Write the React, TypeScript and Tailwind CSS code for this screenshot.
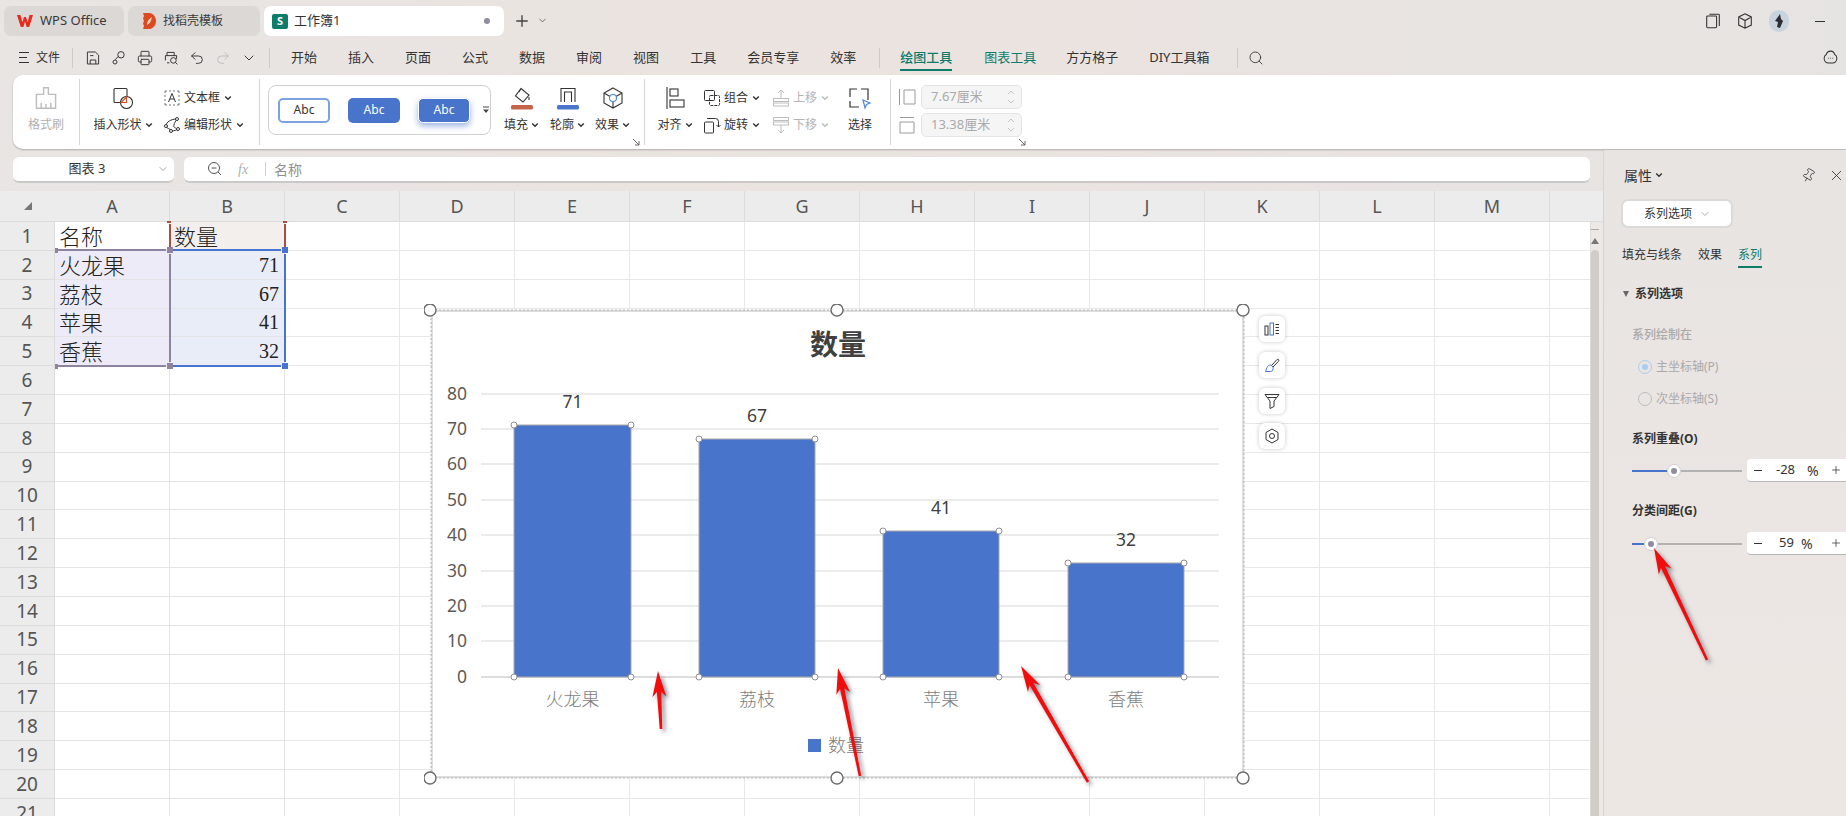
import React from 'react';
import { ChevronDown, Plus, Search, Undo2, Redo2, Pin, X, Printer } from 'lucide-react';

const ink = '#333333';

// small svg wrapper, every toolbar glyph is drawn on a 20 box
const Glyph = ({ size = 18, color = ink, children, className = '' }: { size?: number; color?: string; children: React.ReactNode; className?: string }) => (
  <svg width={size} height={size} viewBox="0 0 20 20" fill="none" stroke={color} strokeWidth="1.2" className={`shrink-0 ${className}`}>
    {children}
  </svg>
);

const Caret = ({ gray }: { gray?: boolean }) => (
  <svg width="8" height="6" viewBox="0 0 8 6" fill="none" stroke={gray ? '#bbbbbb' : '#333333'} strokeWidth="1.4" className="shrink-0 ml-[3px]">
    <path d="M1.2 1.5 4 4.3 6.8 1.5" />
  </svg>
);

const Corner = ({ className }: { className: string }) => (
  <svg width="8" height="8" viewBox="0 0 8 8" fill="none" stroke="#666666" className={`self-end shrink-0 mb-[3px] ${className}`}>
    <path d="M1 1 7 7M7 3v4H3" />
  </svg>
);

const VSep = () => <div className="w-px h-[66px] self-center bg-[#d6d6d6] shrink-0" />;

const MenuSep = ({ className }: { className: string }) => <div className={`w-px h-[20px] bg-[#cfcac7] shrink-0 ${className}`} />;

const RowA = ({ children, className = '' }: { children: React.ReactNode; className?: string }) => (
  <div className={`h-[24px] flex items-center ${className}`}>{children}</div>
);
const RowB = ({ children, className = '' }: { children: React.ReactNode; className?: string }) => (
  <div className={`mt-[4px] h-[22px] flex items-center ${className}`}>{children}</div>
);

const Tall = ({ icon, label, width, caret = true, className = '', gray }: { icon: React.ReactNode; label: string; width: string; caret?: boolean; className?: string; gray?: boolean }) => (
  <div className={`${width} ${className} pt-[11px] flex flex-col items-center shrink-0`}>
    <RowA>{icon}</RowA>
    <RowB className={gray ? 'text-[#b0b0b0]' : ''}>
      <span className="whitespace-nowrap">{label}</span>
      {caret && <Caret />}
    </RowB>
  </div>
);

const SmallItem = ({ icon, label, gray }: { icon: React.ReactNode; label: string; gray?: boolean }) => (
  <>
    {icon}
    <span className={`ml-[3px] whitespace-nowrap ${gray ? 'text-[#b4b4b4]' : ''}`}>{label}</span>
    <span className="ml-[1px]"><Caret gray={gray} /></span>
  </>
);

const AbcStyle = ({ className, children = 'Abc' }: { className: string; children?: React.ReactNode }) => (
  <div className={`w-[52px] h-[25px] rounded-[5px] flex items-center justify-center text-[12px] shrink-0 ${className}`}>{children}</div>
);

const SizeInput = ({ value }: { value: string }) => (
  <div className="w-[101px] h-[24px] rounded-[5px] bg-[#f5f5f5] border border-[#e4e4e4] flex items-center pl-[9px] pr-[5px] text-[#aaaaaa] text-[13px]">
    <span className="flex-1">{value}</span>
    <svg width="10" height="18" viewBox="0 0 10 18" fill="none" stroke="#c4c4c4">
      <path d="M2 6l3-3 3 3M2 12l3 3 3-3" />
    </svg>
  </div>
);

const menuA = ['开始', '插入', '页面', '公式', '数据', '审阅', '视图', '工具'];
const columns = ['A', 'B', 'C', 'D', 'E', 'F', 'G', 'H', 'I', 'J', 'K', 'L', 'M'];
const rowNumbers = Array.from({ length: 21 }, (_, i) => i + 1);

const cellData: Record<number, [string, string]> = {
  1: ['名称', '数量'],
  2: ['火龙果', '71'],
  3: ['荔枝', '67'],
  4: ['苹果', '41'],
  5: ['香蕉', '32'],
};

const ticks = [
  { v: 80, y: 394 },
  { v: 70, y: 429 },
  { v: 60, y: 464 },
  { v: 50, y: 500 },
  { v: 40, y: 535 },
  { v: 30, y: 571 },
  { v: 20, y: 606 },
  { v: 10, y: 641 },
  { v: 0, y: 677 },
];

const bars = [
  { name: '火龙果', value: 71, x: 514, w: 117, top: 425, labelY: 402 },
  { name: '荔枝', value: 67, x: 699, w: 116, top: 439, labelY: 416 },
  { name: '苹果', value: 41, x: 883, w: 116, top: 531, labelY: 508 },
  { name: '香蕉', value: 32, x: 1068, w: 116, top: 563, labelY: 540 },
];

const Knob = ({ x, y, r }: { x: number; y: number; r: number }) => (
  <circle cx={x} cy={y} r={r} fill="#ffffff" stroke={r > 4 ? '#6b6b6b' : '#8f8f8f'} strokeWidth={r > 4 ? 1.4 : 1} />
);

const Chart = () => (
  <svg viewBox="424 304 826 482" className="absolute left-[424px] top-[304px] w-[826px] h-[482px]">
    <rect x="432" y="311" width="811" height="466" fill="#ffffff" stroke="#d4d4d4" strokeWidth="1.5" />
    <rect x="431" y="310" width="813" height="468" fill="none" stroke="#9a9a9a" strokeWidth="0.7" strokeDasharray="2 2" />
    <text x="838" y="355" textAnchor="middle" fontSize="28" fontWeight="600" fill="#404040">数量</text>
    {ticks.map((t) => (
      <g key={t.v}>
        <line x1="481" x2="1219" y1={t.y} y2={t.y} stroke={t.v === 0 ? '#d0d0d0' : '#e4e4e4'} strokeWidth="1.6" />
        <text x="467" y={t.y + 6} textAnchor="end" fontSize="17.5" fill="#5f5a55">{t.v}</text>
      </g>
    ))}
    {bars.map((b) => (
      <g key={b.name}>
        <rect x={b.x} y={b.top} width={b.w} height={677 - b.top} fill="#4874cb" stroke="#a9a9a9" strokeWidth="1" />
        <text x={b.x + b.w / 2} y={b.labelY + 6} textAnchor="middle" fontSize="17.5" fill="#404040">{b.value}</text>
        <text x={b.x + b.w / 2} y={706} textAnchor="middle" fontSize="18" fontWeight="300" fill="#7d7d7d">{b.name}</text>
        <Knob x={b.x} y={b.top} r={3} />
        <Knob x={b.x + b.w} y={b.top} r={3} />
        <Knob x={b.x} y={677} r={3} />
        <Knob x={b.x + b.w} y={677} r={3} />
      </g>
    ))}
    <rect x="808" y="739" width="13" height="13" fill="#4874cb" />
    <text x="828" y="752" fontSize="18" fontWeight="300" fill="#7d7d7d">数量</text>
    <Knob x={430} y={310} r={6} />
    <Knob x={837} y={310} r={6} />
    <Knob x={1243} y={310} r={6} />
    <Knob x={430} y={778} r={6} />
    <Knob x={837} y={778} r={6} />
    <Knob x={1243} y={778} r={6} />
  </svg>
);

// computes the tapered red arrow from tail to tip
const arrowPoints = (tx: number, ty: number, hx: number, hy: number) => {
  const len = Math.hypot(hx - tx, hy - ty);
  const ux = (hx - tx) / len;
  const uy = (hy - ty) / len;
  const nx = -uy;
  const ny = ux;
  const at = (back: number, side: number) => `${hx - ux * back + nx * side},${hy - uy * back + ny * side}`;
  return [
    at(0, 0),
    at(26, 7),
    at(21, 2.2),
    `${tx + nx * 1.3},${ty + ny * 1.3}`,
    `${tx - nx * 1.3},${ty - ny * 1.3}`,
    at(21, -2.2),
    at(26, -7),
  ].join(' ');
};

const RedArrows = () => (
  <svg viewBox="0 0 1846 816" className="absolute left-0 top-0 w-[1846px] h-[816px] pointer-events-none drop-shadow-[3px_3px_2px_rgba(40,30,50,0.5)]">
    <polygon points={arrowPoints(661, 729, 658, 671)} fill="#f20d0d" />
    <polygon points={arrowPoints(860, 776, 838, 668)} fill="#f20d0d" />
    <polygon points={arrowPoints(1088, 782, 1021, 666)} fill="#f20d0d" />
    <polygon points={arrowPoints(1707, 660, 1654, 548)} fill="#f20d0d" />
  </svg>
);

const Slider = ({ fill, value, textClass, pctClass }: { fill: string; value: string; textClass: string; pctClass: string }) => (
  <div className="flex items-center ml-[11px]">
    <div className="w-[110px] flex items-center shrink-0">
      <div className={`${fill} h-[2px] bg-[#4874cb]`} />
      <div className="w-[14px] h-[14px] rounded-full bg-white border border-[#cfcfcf] flex items-center justify-center shrink-0">
        <div className="w-[6px] h-[6px] rounded-full bg-[#8f8ba3]" />
      </div>
      <div className="flex-1 h-[2px] bg-[#b4b2b1]" />
    </div>
    <div className="ml-[5px] w-[110px] h-[23px] shrink-0 bg-white rounded-[4px] border-b border-[#b8b8b8] flex items-center text-[13px] text-[#333333]">
      <span className="ml-[7px] w-[8px] h-px bg-[#333333]" />
      <span className={textClass}>{value}</span>
      <span className={pctClass}>%</span>
      <Plus size={12} strokeWidth={1.5} className="absolute left-[1830px]" />
    </div>
  </div>
);

const SideBtn = ({ children, top }: { children: React.ReactNode; top: string }) => (
  <div className={`absolute left-[1259px] ${top} w-[26px] h-[26px] rounded-[6px] bg-white shadow-[0_0_4px_rgba(0,0,0,0.22)] flex items-center justify-center`}>
    {children}
  </div>
);

export default function App() {
  return (
    <div className="relative w-[1846px] h-[816px] overflow-hidden bg-linear-to-r from-[#e8e5e2] via-[#ebe3e0] to-[#e6e4e2] text-[12px] text-[#333333] font-['Noto_Sans','Noto_Sans_CJK_SC',sans-serif]">
      {/* tabs */}
      <div className="h-[40px] pt-[6px] pl-[4px] flex items-start">
        <div className="w-[120px] h-[30px] rounded-[7px] bg-[#dbd8d5] flex items-center pl-[13px] shrink-0">
          <svg width="16" height="14" viewBox="0 0 16 14" className="shrink-0">
            <path d="M0 1h3.400l2 7.200L7 3h2l1.600 5.200L12.600 1H16l-3.800 12H9.600L8 7.600 6.400 13H3.800z" fill="#e8291c" />
          </svg>
          <span className="ml-[7px] text-[13px] whitespace-nowrap text-[#3a3a3a]">WPS Office</span>
        </div>
        <div className="ml-[4px] w-[132px] h-[30px] rounded-[7px] bg-[#dbd8d5] flex items-center pl-[14px] shrink-0">
          <svg width="14" height="18" viewBox="0 0 14 18" className="shrink-0">
            <path d="M1 1h7c4 1 6 4.500 6 8s-2 7-6 8H1l1-3-1-2.500L2 9 1 6.500 2 4z" fill="#dd4a22" />
            <path d="M5 13c0-4 2-6 5-8-1 3-1 6-5 8z" fill="#f6d7b8" />
          </svg>
          <span className="ml-[7px] whitespace-nowrap text-[#3a3a3a]">找稻壳模板</span>
        </div>
        <div className="ml-[4px] w-[240px] h-[30px] rounded-[7px] bg-white flex items-center pl-[8px] shrink-0">
          <div className="w-[16px] h-[15px] rounded-[2px] bg-[#0c7c6b] flex items-center justify-center text-white text-[11px] font-bold">S</div>
          <span className="ml-[6px] text-[13px] whitespace-nowrap">工作簿1</span>
          <span className="ml-auto mr-[14px] w-[6px] h-[6px] rounded-full bg-[#8f8ca3]" />
        </div>
        <Plus size={18} strokeWidth={1.8} className="ml-[9px] mt-[6px] text-[#444444]" />
        <ChevronDown size={11} strokeWidth={1.6} className="ml-[6px] mt-[9px] text-[#444444]" />
        <div className="ml-auto mr-[21px] h-[30px] flex items-center">
          <Glyph size={18}>
            <rect x="3" y="4.500" width="11" height="13" rx="1" />
            <path d="M6 2.500h10a1 1 0 0 1 1 1v12" />
          </Glyph>
          <Glyph size={18} className="ml-[14px]">
            <path d="M10 2l7 3.500v9L10 18l-7-3.500v-9zM3 5.500l7 4 7-4M10 9.500V18" />
          </Glyph>
          <div className="ml-[15px] w-[20px] h-[22px] rounded-full bg-[#c8d3de] flex items-center justify-center">
            <svg width="12" height="16" viewBox="0 0 12 16"><path d="M7 1 2 8l3 1-1 5 3 1 3-7-2-2z" fill="#2d2d33" /></svg>
          </div>
          <div className="ml-[26px] w-[10px] h-px bg-[#333333]" />
        </div>
      </div>

      {/* menu row */}
      <div className="h-[35px] pl-[19px] flex items-center text-[13px]">
        <div className="w-[10px] h-[11px] flex flex-col justify-between shrink-0">
          <span className="h-px bg-[#333333]" />
          <span className="h-px bg-[#333333] w-[8px]" />
          <span className="h-px bg-[#333333]" />
        </div>
        <span className="ml-[7px] text-[12px]">文件</span>
        <MenuSep className="ml-[12px]" />
        <div className="ml-[12px] flex items-center gap-[10px]">
          <Glyph size={16}>
            <path d="M3 2.500h10l4 4v11H3zM6.500 17.500v-5h7v5M6.500 7h4" />
          </Glyph>
          <Glyph size={16}>
            <circle cx="12.500" cy="6" r="4" /><path d="M9 8 5.500 12" /><circle cx="5" cy="15" r="2.500" />
          </Glyph>
          <Printer size={16} strokeWidth={1.4} />
          <Glyph size={16}>
            <path d="M5 7V3h9v4M3 13V7h14v4M5 16h3" /><circle cx="13" cy="13" r="3.500" /><path d="m15.500 15.500 2.500 2.500" />
          </Glyph>
          <Undo2 size={16} strokeWidth={1.4} />
          <Redo2 size={16} strokeWidth={1.4} className="text-[#bcbcbc]" />
          <ChevronDown size={16} strokeWidth={1.4} />
        </div>
        <MenuSep className="ml-[12px]" />
        <div className="ml-[21px] flex items-center gap-[31px] whitespace-nowrap">
          {menuA.map((m) => (
            <span key={m}>{m}</span>
          ))}
          <span>会员专享</span>
          <span>效率</span>
        </div>
        <MenuSep className="ml-[23px]" />
        <div className="ml-[20px] relative text-[#0c7c6b] font-medium whitespace-nowrap">
          绘图工具
          <div className="absolute left-0 right-0 top-[21px] h-[2px] bg-[#0c7c6b]" />
        </div>
        <span className="ml-[32px] text-[#0c7c6b] whitespace-nowrap">图表工具</span>
        <span className="ml-[30px] whitespace-nowrap">方方格子</span>
        <span className="ml-[31px] whitespace-nowrap">DIY工具箱</span>
        <MenuSep className="ml-[28px]" />
        <Search size={16} strokeWidth={1.3} className="ml-[10px]" />
        <div className="ml-auto mr-[7px]">
          <Glyph size={17}>
            <path d="M10 2.500c3 0 4.500 2 5 4 2 1 2.500 3 2.500 4.500 0 3.500-2.500 5.500-5 5.500h-5c-2.500 0-5-2-5-5.500 0-1.500.5-3.500 2.500-4.500.5-2 2-4 5-4z" />
            <path d="M7 11h.8M9.700 11h.8M12.300 11h.8" />
          </Glyph>
        </div>
      </div>

      {/* ribbon */}
      <div className="ml-[13px] h-[74px] rounded-l-[10px] bg-white shadow-[0_1px_2px_rgba(0,0,0,0.25)] flex items-stretch">
        <Tall
          width="w-[66px]"
          gray
          caret={false}
          label="格式刷"
          icon={
            <Glyph size={24} color="#bdbdbd">
              <path d="M8 1.500h4v5.500h6v11.500H2V7h6zM6 18.500v-4.500M10 18.500v-3.500M14 18.500v-4.500" />
            </Glyph>
          }
        />
        <VSep />
        <Tall
          width="w-[60px]"
          className="ml-[13px]"
          label="插入形状"
          icon={
            <svg width="24" height="24" viewBox="0 0 24 24" fill="none" stroke="#333333" strokeWidth="1.1">
              <rect x="3" y="2.500" width="13" height="14" rx="1" />
              <circle cx="15.500" cy="16.500" r="6" fill="#ffffff" />
              <path d="M15.500 11 10 16.500h5.500z" stroke="#d9472b" fill="#ffffff" />
            </svg>
          }
        />
        <div className="ml-[10px] w-[96px] pt-[11px] shrink-0">
          <RowA>
            <SmallItem
              label="文本框"
              icon={
                <svg width="18" height="18" viewBox="0 0 18 18" fill="none" stroke="#333333" className="shrink-0">
                  <path d="M2 2v14M16 2v14M2 2h14M2 16h14" strokeDasharray="2 2" stroke="#777777" />
                  <path d="M5.500 13 9 4.500 12.500 13M7 10h4" />
                </svg>
              }
            />
          </RowA>
          <RowB>
            <SmallItem
              label="编辑形状"
              icon={
                <svg width="18" height="18" viewBox="0 0 18 18" fill="none" stroke="#333333" className="shrink-0">
                  <path d="M14 3C8 3 3 6 3 10c0 3 5 2 5 5 3 0 6-1 7-2-3-1-5-2-4-4 0-2 2-4 3-6z" />
                  <circle cx="14" cy="3" r="1.500" fill="#fff" /><circle cx="3" cy="10" r="1.500" fill="#fff" /><circle cx="8" cy="15" r="1.500" fill="#fff" /><circle cx="15" cy="13" r="1.500" fill="#fff" />
                </svg>
              }
            />
          </RowB>
        </div>
        <VSep />
        <div className="ml-[8px] mt-[10px] w-[223px] h-[50px] rounded-[8px] border border-[#cfcfcf] pl-[9px] flex items-center shrink-0">
          <AbcStyle className="border-2 border-[#7aa3e0] text-[#333333] bg-white" />
          <AbcStyle className="ml-[18px] bg-[#4874cb] text-white" />
          <AbcStyle className="ml-[18px] bg-[#4874cb] text-white shadow-[0_3px_6px_rgba(72,116,203,0.55)] border border-white" />
          <svg width="8" height="10" viewBox="0 0 8 10" fill="#444444" className="ml-[12px]">
            <path d="M1 1.500h6v1H1zM1 4.500h6L4 8z" />
          </svg>
        </div>
        <Tall
          width="w-[35px]"
          className="ml-[13px]"
          label="填充"
          icon={
            <svg width="24" height="24" viewBox="0 0 24 24" fill="none" stroke="#333333" strokeWidth="1.1">
              <path d="M11 2.500 19 9l-6 7-7.500-6zM11 2.500 9 6M19 11v3" />
              <rect x="1" y="19" width="22" height="4.500" rx="1.500" fill="#c3654a" stroke="none" />
            </svg>
          }
        />
        <Tall
          width="w-[35px]"
          className="ml-[11px]"
          label="轮廓"
          icon={
            <svg width="24" height="24" viewBox="0 0 24 24" fill="none" stroke="#333333" strokeWidth="1.1">
              <path d="M5 16V2.500h14V16M8.500 16V6h7v10" />
              <rect x="1" y="19" width="22" height="4.500" rx="1.500" fill="#4874cb" stroke="none" />
            </svg>
          }
        />
        <Tall
          width="w-[35px]"
          className="ml-[10px]"
          label="效果"
          icon={
            <svg width="24" height="24" viewBox="0 0 24 24" fill="none" stroke="#333333" strokeWidth="1.1">
              <path d="M12 2l9 5v10l-9 5-9-5V7zM3 7l6 3.500M21 7l-6 3.500M12 16v6" />
              <circle cx="12" cy="12" r="3.500" stroke="#4f86e0" />
            </svg>
          }
        />
        <Corner className="ml-[2px]" />
        <div className="ml-[4px] flex"><VSep /></div>
        <Tall
          width="w-[36px]"
          className="ml-[12px]"
          label="对齐"
          icon={
            <svg width="24" height="24" viewBox="0 0 24 24" fill="none" stroke="#333333" strokeWidth="1.1">
              <path d="M4 1v22" />
              <rect x="7" y="3" width="8" height="7" />
              <rect x="7" y="14" width="14" height="7" />
            </svg>
          }
        />
        <div className="ml-[10px] w-[60px] pt-[11px] shrink-0">
          <RowA>
            <SmallItem
              label="组合"
              icon={
                <svg width="18" height="18" viewBox="0 0 18 18" fill="none" stroke="#333333" className="shrink-0">
                  <rect x="1.500" y="1.500" width="10" height="10" rx="1" />
                  <rect x="6.500" y="6.500" width="10" height="10" rx="1" strokeDasharray="3 1" />
                </svg>
              }
            />
          </RowA>
          <RowB>
            <SmallItem
              label="旋转"
              icon={
                <svg width="18" height="18" viewBox="0 0 18 18" fill="none" stroke="#333333" className="shrink-0">
                  <rect x="1.500" y="6" width="9" height="11" rx="1" />
                  <path d="M4 2.500h8.500a3 3 0 0 1 3 3V11M13.500 9l2 2 2-2" />
                </svg>
              }
            />
          </RowB>
        </div>
        <div className="ml-[9px] w-[58px] pt-[11px] shrink-0">
          <RowA>
            <SmallItem
              gray
              label="上移"
              icon={
                <svg width="18" height="18" viewBox="0 0 18 18" fill="none" stroke="#bdbdbd" className="shrink-0">
                  <rect x="1.500" y="9.500" width="15" height="3" /><rect x="1.500" y="14" width="15" height="3" />
                  <path d="M9 9V1.500M6 4l3-3 3 3" />
                </svg>
              }
            />
          </RowA>
          <RowB>
            <SmallItem
              gray
              label="下移"
              icon={
                <svg width="18" height="18" viewBox="0 0 18 18" fill="none" stroke="#bdbdbd" className="shrink-0">
                  <rect x="1.500" y="1.500" width="15" height="3" /><rect x="1.500" y="6" width="15" height="3" />
                  <path d="M9 9v7.500M6 14l3 3 3-3" />
                </svg>
              }
            />
          </RowB>
        </div>
        <Tall
          width="w-[24px]"
          className="ml-[18px]"
          caret={false}
          label="选择"
          icon={
            <svg width="24" height="24" viewBox="0 0 24 24" fill="none" stroke="#333333" strokeWidth="1.2">
              <path d="M9 3H2v8M2 15v6h9M13 3h7v11" />
              <path d="M15 14l7 3-3.500 1.500L17 22z" stroke="#4f86e0" fill="#ffffff" />
            </svg>
          }
        />
        <div className="ml-[18px] flex"><VSep /></div>
        <div className="ml-[7px] pt-[10px] flex flex-col gap-[4px] shrink-0">
          <div className="h-[24px] flex items-center">
            <svg width="18" height="20" viewBox="0 0 18 20" fill="none" stroke="#9a9a9a" className="shrink-0">
              <path d="M1.500 2v16M6 3h11v14H6z" />
            </svg>
            <div className="ml-[5px]"><SizeInput value="7.67厘米" /></div>
          </div>
          <div className="h-[24px] flex items-center">
            <svg width="18" height="20" viewBox="0 0 18 20" fill="none" stroke="#9a9a9a" className="shrink-0">
              <path d="M2 2.500h14M2 7h14v11H2z" />
            </svg>
            <div className="ml-[5px]"><SizeInput value="13.38厘米" /></div>
          </div>
        </div>
        <Corner className="-ml-[4px]" />
      </div>

      {/* body */}
      <div className="mt-px h-[666px] flex">
        <div className="w-[1603px] shrink-0">
          <div className="mt-[7px] h-[26px] pl-[13px] flex">
            <div className="w-[161px] rounded-[6px] bg-white border-b-2 border-[#c9c9c9] flex items-center shrink-0">
              <span className="flex-1 text-center text-[13px] pl-[4px]">图表 3</span>
              <ChevronDown size={12} strokeWidth={1.3} className="mr-[5px] text-[#777777]" />
            </div>
            <div className="ml-[10px] w-[1406px] rounded-[6px] bg-white border-b-2 border-[#c9c9c9] flex items-center shrink-0">
              <svg width="16" height="16" viewBox="0 0 16 16" fill="none" stroke="#555555" className="ml-[23px]">
                <circle cx="7" cy="7" r="5.500" /><path d="M4.500 7h5M11 11l3 3" />
              </svg>
              <span className="ml-[15px] w-[14px] text-[14px] italic text-[#b0b0b0] font-['Liberation_Serif',serif]">fx</span>
              <span className="ml-[13px] w-px h-[14px] bg-[#d0d0d0]" />
              <span className="ml-[8px] text-[14px] text-[#8f8f8f]">名称</span>
            </div>
          </div>

          {/* column header */}
          <div className="mt-[8px] h-[31px] flex bg-[#ececec] border-b border-[#dcdcdc]">
            <div className="w-[55px] shrink-0 flex items-center justify-center">
              <svg width="10" height="10" viewBox="0 0 10 10"><path d="M9 1v8H1z" fill="#777777" /></svg>
            </div>
            {columns.map((c) => (
              <div key={c} className="w-[115px] shrink-0 border-r border-[#dcdcdc] flex items-center justify-center text-[18px] text-[#555555]">
                {c}
              </div>
            ))}
            <div className="flex-1" />
          </div>

          {/* sheet */}
          <div className="flex h-[594px] overflow-hidden">
            <div className="w-[1590px] shrink-0">
              {rowNumbers.map((r) => {
                const data = cellData[r];
                return (
                  <div key={r} className="h-[28.85px] flex">
                    <div className="w-[55px] shrink-0 bg-[#ececec] border-r border-b border-[#dcdcdc] flex items-center justify-center text-[19px] text-[#555555]">
                      {r}
                    </div>
                    <div className={`w-[115px] shrink-0 border-r border-b border-[#e4e4e4] flex items-center pl-[4px] text-[22px] leading-none text-[#222222] font-light ${data && r > 1 ? 'bg-[#ecebf7]' : 'bg-white'}`}>
                      {data?.[0]}
                    </div>
                    <div
                      className={`w-[115px] shrink-0 border-r border-b border-[#e4e4e4] flex items-center text-[#222222] ${
                        r === 1 ? 'bg-[#f3efec] pl-[4px] text-[22px] leading-none font-light' : data ? 'bg-[#e9edf8] justify-end pr-[5px] text-[20px] font-[\'Liberation_Serif\',serif]' : 'bg-white'
                      }`}
                    >
                      {data?.[1]}
                    </div>
                    {columns.slice(2).map((c) => (
                      <div key={c} className="w-[115px] shrink-0 bg-white border-r border-b border-[#e8e8e8]" />
                    ))}
                    <div className="flex-1 bg-white border-b border-[#e8e8e8]" />
                  </div>
                );
              })}
            </div>
            {/* scrollbar */}
            <div className="w-[13px] shrink-0 bg-[#ebe8e6] border-l border-[#dedbd9] flex flex-col items-center pr-[4px]">
              <span className="mt-[7px] w-[8px] h-px bg-[#aaaaaa]" />
              <svg width="8" height="6" viewBox="0 0 8 6" className="mt-[8px]"><path d="M4 0l4 6H0z" fill="#777777" /></svg>
              <div className="mt-[6px] w-[8px] flex-1 rounded-t-[4px] bg-[#d0ccc8]" />
            </div>
          </div>
        </div>

        {/* property panel */}
        <div className="flex-1 bg-linear-to-b from-[#e8e4e1] to-[#ede7e4] border-l border-[#d8d4d1] pl-[17px] overflow-hidden">
          <div className="mt-[15px] h-[20px] flex items-center">
            <span className="ml-[3px] text-[14px]">属性</span>
            <Caret />
            <Pin size={15} strokeWidth={1.2} className="ml-[138px] rotate-[30deg]" />
            <X size={17} strokeWidth={1.2} className="ml-[12px]" />
          </div>
          <div className="mt-[14px] w-[112px] h-[29px] rounded-[7px] bg-white border-2 border-[#dcd9d6] flex items-center pl-[21px]">
            <span className="whitespace-nowrap">系列选项</span>
            <ChevronDown size={12} strokeWidth={1.2} className="ml-[7px] text-[#777777]" />
          </div>
          <div className="mt-[17px] h-[23px] ml-px flex gap-[16px] leading-[20px] whitespace-nowrap">
            <span>填充与线条</span>
            <span>效果</span>
            <span className="h-[23px] border-b-2 border-[#0c7c6b] text-[#0c7c6b]">系列</span>
          </div>
          <div className="mt-[16px] h-[20px] ml-[2px] flex items-center font-bold">
            <svg width="6" height="6" viewBox="0 0 6 6" className="shrink-0"><path d="M0 0h6L3 6z" fill="#666666" /></svg>
            <span className="ml-[6px]">系列选项</span>
          </div>
          <div className="mt-[21px] h-[20px] ml-[11px] flex items-center text-[#a9a9a9] font-medium">系列绘制在</div>
          <div className="mt-[12px] h-[20px] ml-[17px] flex items-center text-[#a9a9a9]">
            <span className="w-[14px] h-[14px] rounded-full border border-[#a9cdf0] flex items-center justify-center">
              <span className="w-[6px] h-[6px] rounded-full bg-[#a9cdf0]" />
            </span>
            <span className="ml-[4px]">主坐标轴(P)</span>
          </div>
          <div className="mt-[12px] h-[20px] ml-[17px] flex items-center text-[#a9a9a9]">
            <span className="w-[14px] h-[14px] rounded-full border border-[#bcbcbc]" />
            <span className="ml-[4px]">次坐标轴(S)</span>
          </div>
          <div className="mt-[20px] h-[20px] ml-[11px] flex items-center font-bold">系列重叠(O)</div>
          <div className="mt-[10px]">
            <Slider fill="w-[35px]" value="-28" textClass="ml-[14px] w-[20px]" pctClass="ml-[11px] text-[14px]" />
          </div>
          <div className="mt-[19px] h-[20px] ml-[11px] flex items-center font-bold">分类间距(G)</div>
          <div className="mt-[11px]">
            <Slider fill="w-[12px]" value="59" textClass="ml-[17px] w-[16px]" pctClass="ml-[6px] text-[14px]" />
          </div>
        </div>
      </div>

      {/* range highlights */}
      <div className="absolute left-[169px] top-[224px] w-[2px] h-[24px] bg-[#a94f3f]" />
      <div className="absolute left-[284px] top-[224px] w-[2px] h-[24px] bg-[#a94f3f]" />
      <div className="absolute left-[167px] top-[221px] w-[4px] h-[2px] bg-[#a94f3f]" />
      <div className="absolute left-[283px] top-[221px] w-[4px] h-[2px] bg-[#a94f3f]" />
      <div className="absolute left-[58px] top-[249px] w-[108px] h-[2px] bg-[#8f83a0]" />
      <div className="absolute left-[58px] top-[365px] w-[108px] h-[2px] bg-[#8f83a0]" />
      <div className="absolute left-[169px] top-[254px] w-[2px] h-[108px] bg-[#8f83a0]" />
      <div className="absolute left-[173px] top-[249px] w-[108px] h-[2px] bg-[#4874cf]" />
      <div className="absolute left-[173px] top-[365px] w-[108px] h-[2px] bg-[#4874cf]" />
      <div className="absolute left-[284px] top-[254px] w-[2px] h-[108px] bg-[#4874cf]" />
      <div className="absolute left-[55px] top-[248px] w-[3px] h-[5px] bg-[#8f83a0]" />
      <div className="absolute left-[55px] top-[364px] w-[3px] h-[5px] bg-[#8f83a0]" />
      <div className="absolute left-[167px] top-[247px] w-[6px] h-[6px] bg-[#8f83a0]" />
      <div className="absolute left-[167px] top-[363px] w-[6px] h-[6px] bg-[#8f83a0]" />
      <div className="absolute left-[282px] top-[247px] w-[6px] h-[6px] bg-[#4874cf]" />
      <div className="absolute left-[282px] top-[363px] w-[6px] h-[6px] bg-[#4874cf]" />

      <Chart />

      <SideBtn top="top-[316px]">
        <svg width="16" height="16" viewBox="0 0 16 16" fill="none" stroke="#333333">
          <rect x="1" y="5" width="3" height="9" />
          <rect x="6" y="2" width="3.500" height="12" stroke="#4874cf" />
          <path d="M11.500 3.500H15M11.500 6.500H15M11.500 9.500H15M11.500 12.500H15" />
        </svg>
      </SideBtn>
      <SideBtn top="top-[352px]">
        <svg width="17" height="17" viewBox="0 0 17 17" fill="none" stroke="#333333">
          <path d="M7.500 8.500 13 2.500c1-.8 2.500.6 1.500 1.700L9 10z" />
          <path d="M7 8c-2 0-3 .5-4 2.500L1.500 14.500h5c2 0 3-2 2.500-4.500z" stroke="#4874cf" />
        </svg>
      </SideBtn>
      <SideBtn top="top-[388px]">
        <svg width="16" height="16" viewBox="0 0 16 16" fill="none" stroke="#333333">
          <path d="M1 1.500h14L10 8v5.500l-4 2V8zM3.500 4.500h9" />
        </svg>
      </SideBtn>
      <SideBtn top="top-[423px]">
        <svg width="16" height="16" viewBox="0 0 16 16" fill="none" stroke="#333333">
          <path d="M8 1l6 3.500v7L8 15l-6-3.500v-7z" />
          <circle cx="8" cy="8" r="2.500" />
        </svg>
      </SideBtn>

      <RedArrows />
    </div>
  );
}
